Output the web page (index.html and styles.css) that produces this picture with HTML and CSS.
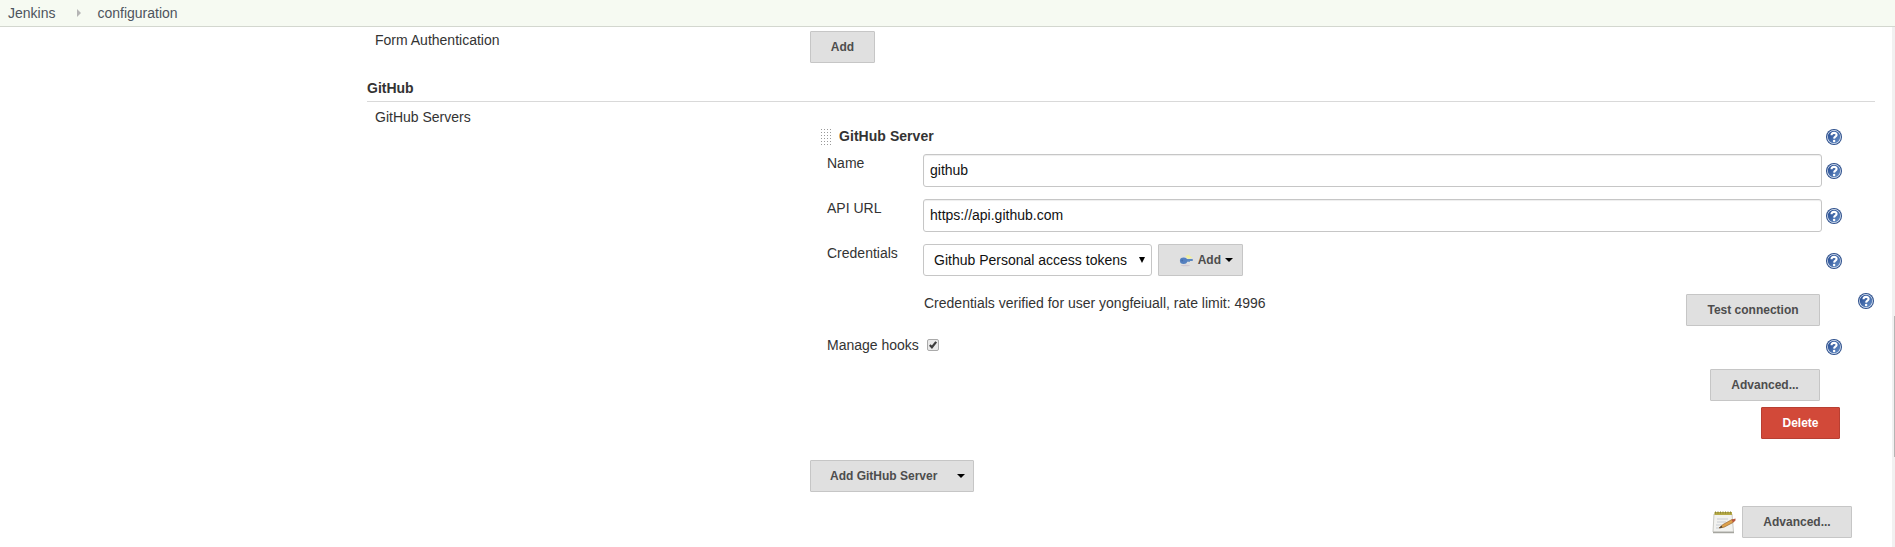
FILE: index.html
```html
<!DOCTYPE html>
<html lang="en">
<head>
<meta charset="utf-8">
<title>configuration [Jenkins]</title>
<link rel="stylesheet" href="styles.css">
</head>
<body>
<svg class="defs" width="0" height="0" aria-hidden="true">
  <defs>
    <linearGradient id="blue" x1="0" y1="0" x2="1" y2="1"><stop offset="0" stop-color="#20468f"/><stop offset="1" stop-color="#6a92c8"/></linearGradient>
    <symbol id="help" viewBox="0 0 16 16">
      <circle cx="8" cy="8" r="8" fill="#2d4f8c"/>
      <circle cx="8" cy="8" r="6.9" fill="#e4ecf6"/>
      <circle cx="8" cy="8" r="6.2" fill="url(#blue)"/>
      <path d="M5.5 6.3C5.5 3.2 10.6 3.1 10.6 6C10.6 7.7 8.2 7.7 8.1 9.6" fill="none" stroke="#fff" stroke-width="2.1"/>
      <circle cx="8.1" cy="11.9" r="1.25" fill="#fff"/>
    </symbol>
  </defs>
</svg>
<nav class="breadcrumb"><span>Jenkins</span><i class="crumb-arrow"></i><span>configuration</span></nav>
<div class="page">
  <main class="form">
    <div class="row auth"><div class="label">Form Authentication</div><button class="btn">Add</button></div>
    <h2 class="section">GitHub</h2>
    <div class="row servers">
      <div class="label">GitHub Servers</div>
      <div class="server">
        <div class="line title"><i class="grip"></i><b>GitHub Server</b><svg class="help"><use href="#help"/></svg></div>
        <div class="line field"><label>Name</label><input class="text" value="github"><svg class="help"><use href="#help"/></svg></div>
        <div class="line field"><label>API URL</label><input class="text" value="https://api.github.com"><svg class="help"><use href="#help"/></svg></div>
        <div class="line field creds"><label>Credentials</label>
          <div class="select"><span>Github Personal access tokens</span><svg width="6" height="6"><path d="M0 0H6L3 6Z"/></svg></div>
          <button class="btn add"><svg width="16" height="16" viewBox="0 0 16 16"><path d="M7 4L10 2L14.5 5.5L10 7Z" fill="#f2f0a0"/><ellipse cx="7" cy="14" rx="5" ry=".8" fill="#cfc6cf"/><path d="M7 7H15V9H12V10H7Z" fill="#5b87c0"/><ellipse cx="5" cy="8.8" rx="4" ry="3.6" fill="#5580bf"/><circle cx="3.5" cy="8.5" r="1" fill="#456ca8"/></svg><span>Add</span><i class="caret"></i></button>
          <svg class="help"><use href="#help"/></svg>
        </div>
        <div class="line verify"><span>Credentials verified for user yongfeiuall, rate limit: 4996</span><button class="btn">Test connection</button><svg class="help"><use href="#help"/></svg></div>
        <div class="line hooks"><label>Manage hooks</label><span class="check"><svg width="10" height="10" viewBox="0 0 11 11"><path d="M2 5.5L4.3 8L9 2" fill="none" stroke="#3c3c3c" stroke-width="2.4"/></svg></span><svg class="help"><use href="#help"/></svg></div>
        <div class="line actions"><button class="btn">Advanced...</button></div>
        <div class="line delete"><button class="btn danger">Delete</button></div>
        <div class="line addserver"><button class="btn"><span>Add GitHub Server</span><i class="caret"></i></button></div>
        <div class="line bottom">
          <svg width="24" height="24" viewBox="0 0 24 24"><path d="M2 3H20L21.5 21H1Z" fill="#f2f2ef" stroke="#c9c9c4"/><path d="M1 21.5H22" stroke="#a5a59f" stroke-width="1.5"/><path d="M2.5 1H20V4H2.5Z" fill="#b5a945"/><path d="M3 1.5H20" stroke="#8b8437" stroke-dasharray="1 1.5" stroke-width="2"/><path d="M5 8H16M5 11H14M4 14H10M4 17H9" stroke="#c8ccd2"/><path d="M7 17L11 13.5L20 8.5L22.5 9.5L21 11.5L12 16.2Z" fill="#dfa24b" stroke="#9a6a32" stroke-width=".7"/><path d="M19.5 8.7L23.5 7.5V9.5L21 11.5Z" fill="#b8563e"/><path d="M7 17L9.5 14.8L10.5 16.4Z" fill="#443a2c"/></svg>
          <button class="btn">Advanced...</button>
        </div>
      </div>
    </div>
  </main>
  <div class="scrollbar"><div class="thumb"></div></div>
</div>
</body>
</html>
```
FILE: styles.css
```css
* { box-sizing: border-box; }
body { margin: 0; height: 547px; overflow: hidden; background: #fff; color: #333; font: 14px/18px "Liberation Sans", Arial, sans-serif; }
.defs { display: block; height: 0; }
.breadcrumb { height: 27px; display: flex; align-items: center; padding: 0 8px 1px; background: #f6faf2; border-bottom: 1px solid #d3d7cf; color: #4d545d; }
.crumb-arrow { margin: 0 16px 0 22px; border: 4px solid transparent; border-left-color: #b5b5b5; border-right-width: 0; width: 4px; }
.page { display: flex; height: 520px; }
.form { flex: 1; padding: 4px 17px 0 367px; }
.row { display: flex; }
.label { width: 443px; flex: none; padding-left: 8px; }
.auth { height: 48px; }
.auth .btn { width: 65px; }
.section { margin: 0; height: 23px; font-size: 14px; line-height: 18px; border-bottom: 1px solid #d9d9d9; }
.servers .label { padding-top: 6px; }
.server { flex: 1; padding-top: 25px; }
.line { display: flex; align-items: flex-start; }
.help { width: 16px; height: 16px; flex: none; }
.title { height: 27px; padding: 2px 33px 0 10px; }
.title b { margin: -2px 0 0 7px; flex: 1; letter-spacing: .05px; }
.grip { width: 12px; height: 18px; margin-top: -1px; background: radial-gradient(circle, #999 0 .7px, transparent 1px) 0 0 / 3px 3px; }
.field { height: 45px; padding: 0 33px 0 17px; }
.field label { width: 96px; flex: none; }
.field .help { margin: 9px 0 0 4px; }
.text { flex: 1; height: 33px; min-width: 0; padding: 0 6px 2px; border: 1px solid #c6c6c6; border-radius: 3px; font: inherit; color: #111; background: #fff; box-shadow: inset 0 1px 1px rgba(0,0,0,.07); }
.btn { height: 32px; padding: 0 19px 1px; border: 1px solid #c6c6c6; border-radius: 1px; background: #e0e0e0; color: #4d4d4d; font: bold 12px/16px "Liberation Sans", Arial, sans-serif; white-space: nowrap; }
.caret { width: 8px; border: 4px solid transparent; border-top-color: #000; border-bottom-width: 0; }
.select { width: 229px; height: 32px; display: flex; align-items: center; justify-content: space-between; padding: 0 6px 0 10px; border: 1px solid #c6c6c6; border-radius: 3px; color: #111; }
.add { width: 85px; margin-left: 6px; display: flex; align-items: center; padding: 0 9px 1px 20px; }
.add span { margin: 0 4px 0 4px; }
.creds .help { margin-left: auto; }
.verify { height: 49px; padding: 4px 1px 0 114px; }
.verify span { padding-top: 1px; }
.verify .btn { width: 134px; margin: 1px 38px 0 auto; padding-left: 0; padding-right: 0; }
.hooks { height: 31px; padding: 1px 33px 0 17px; }
.hooks label { width: 100px; margin-top: -3px; }
.hooks .help { margin-left: auto; }
.check { width: 12px; height: 12px; border: 1px solid #aaa; border-radius: 2px; background: #e9e9e9; display: flex; }
.actions { height: 38px; justify-content: flex-end; padding-right: 55px; }
.actions .btn, .bottom .btn { width: 110px; padding-left: 0; padding-right: 0; }
.delete { height: 53px; justify-content: flex-end; padding-right: 35px; }
.btn.danger { width: 79px; background: #d24939; border-color: #b83f32; color: #fff; padding-left: 0; padding-right: 0; }
.addserver { height: 46px; }
.addserver .btn { width: 164px; display: flex; align-items: center; justify-content: space-between; padding-right: 8px; }
.bottom { justify-content: flex-end; padding-right: 23px; gap: 6px; }
.bottom svg { margin-top: 5px; }
.scrollbar { width: 3px; background: #f1f1f1; padding: 289px 0 0 2px; }
.thumb { height: 141px; background: #b5b5b5; }
```
